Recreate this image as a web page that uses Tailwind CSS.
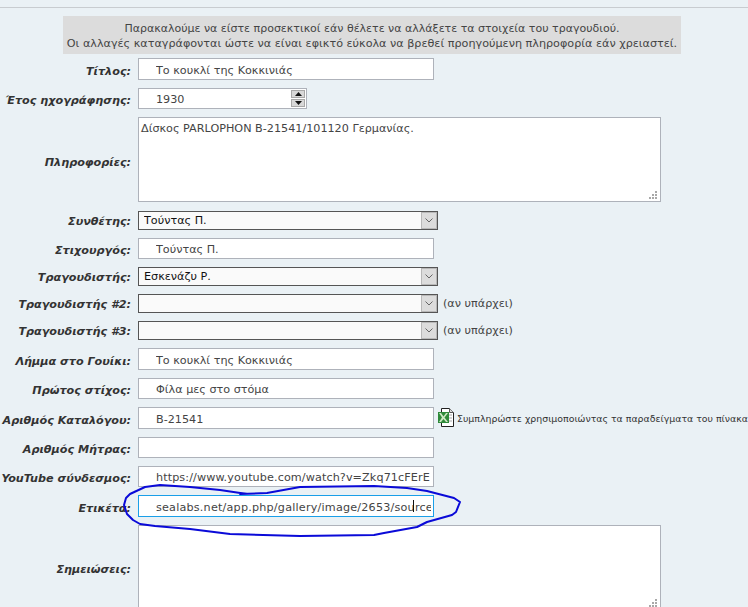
<!DOCTYPE html>
<html lang="en">
  <head>
    <meta charset="UTF-8" />
    <title>Επεξεργασία τραγουδιού</title>
    <script src="https://cdn.jsdelivr.net/npm/@tailwindcss/browser@4"></script>
  </head>
  <body class="bg-[#eaf1f5] h-[607px] overflow-hidden font-['DejaVu_Sans',sans-serif] text-[11.2px] text-[#444]">
    <div class="relative h-[607px] overflow-hidden pt-[7px]">
      <div class="border-t border-[#c8ccd0]"></div>

      <div class="ml-[63px] mt-2 w-[618px] h-[38px] bg-[#dcdcdc] text-center leading-[15px] pt-[5px] whitespace-nowrap">
        <span class="text-[11px]">Παρακαλούμε να είστε προσεκτικοί εάν θέλετε να αλλάξετε τα στοιχεία του τραγουδιού.</span><br />
        Οι αλλαγές καταγράφονται ώστε να είναι εφικτό εύκολα να βρεθεί προηγούμενη πληροφορία εάν χρειαστεί.
      </div>

      <form class="mt-1 grid grid-cols-[131px_1fr] gap-x-[7px] gap-y-2 leading-[13px]">
        <label class="flex items-center justify-end whitespace-nowrap font-bold italic text-[#333] pt-1">Τίτλος:</label>
        <input class="w-[296px] h-[22px] border border-[#aeb2ba] bg-white pl-[17px] pr-0.5 pt-0.5 outline-none text-[#444]" value="Το κουκλί της Κοκκινιάς" />

        <label class="flex items-center justify-end whitespace-nowrap font-bold italic text-[#333] pt-1">Έτος ηχογράφησης:</label>
        <div class="relative w-[169px] h-[21px]">
          <input class="w-full h-full border border-[#aeb2ba] bg-white pl-[17px] pt-0.5 outline-none text-[#444]" value="1930" />
          <div class="absolute right-[2px] top-[2px] w-[14px] h-[17px] flex flex-col gap-px bg-white">
            <span class="flex-1 flex items-center justify-center bg-[#d8d8d8] border border-[#a8a8a8]"><svg width="7" height="4"><path d="M3.5 0 7 4H0z" fill="#111" /></svg></span>
            <span class="flex-1 flex items-center justify-center bg-[#d8d8d8] border border-[#a8a8a8]"><svg width="7" height="4"><path d="M0 0h7L3.5 4z" fill="#111" /></svg></span>
          </div>
        </div>

        <label class="flex items-center justify-end whitespace-nowrap font-bold italic text-[#333] pt-1">Πληροφορίες:</label>
        <div class="relative w-[523px] h-[85px] mb-px">
          <textarea class="block w-full h-full resize-none border border-[#aeb2ba] bg-white px-[2px] pt-[4px] outline-none text-[#444]">Δίσκος PARLOPHON B-21541/101120 Γερμανίας.</textarea>
          <svg class="absolute right-[4px] bottom-[3px]" width="8" height="8" fill="#a8a8a8"><path d="M6 0h2v2H6zM3 3h2v2H3zM6 3h2v2H6zM0 6h2v2H0zM3 6h2v2H3zM6 6h2v2H6z" /></svg>
        </div>

        <label class="flex items-center justify-end whitespace-nowrap font-bold italic text-[#333] pt-0.5">Συνθέτης:</label>
        <div class="relative w-[300px] h-[19px]">
          <select class="appearance-none w-full h-full border border-[#555] bg-[#fafafa] pl-[5px] outline-none text-[#111]"><option>Τούντας Π.</option></select>
          <span class="absolute right-px top-px w-[16px] h-[17px] flex items-center justify-center bg-[#dcdcdc] border border-[#b8b8b8]"><svg width="8" height="5" fill="none" stroke="#666"><path d="m.5.5 3.5 3.5L7.5.5" /></svg></span>
        </div>

        <label class="flex items-center justify-end whitespace-nowrap font-bold italic text-[#333] pt-1">Στιχουργός:</label>
        <input class="w-[296px] h-[21px] border border-[#aeb2ba] bg-white pl-[17px] pr-0.5 pt-0.5 outline-none text-[#444]" value="Τούντας Π." />

        <label class="flex items-center justify-end whitespace-nowrap font-bold italic text-[#333] pt-0.5">Τραγουδιστής:</label>
        <div class="relative w-[300px] h-[19px]">
          <select class="appearance-none w-full h-full border border-[#555] bg-[#fafafa] pl-[5px] outline-none text-[#111]"><option>Εσκενάζυ Ρ.</option></select>
          <span class="absolute right-px top-px w-[16px] h-[17px] flex items-center justify-center bg-[#dcdcdc] border border-[#b8b8b8]"><svg width="8" height="5" fill="none" stroke="#666"><path d="m.5.5 3.5 3.5L7.5.5" /></svg></span>
        </div>

        <label class="flex items-center justify-end whitespace-nowrap font-bold italic text-[#333] pt-0.5">Τραγουδιστής #2:</label>
        <div class="flex items-center gap-[5px]">
          <div class="relative w-[300px] h-[19px]">
            <select class="appearance-none w-full h-full border border-[#555] bg-[#fafafa] pl-[5px] outline-none"><option></option></select>
            <span class="absolute right-px top-px w-[16px] h-[17px] flex items-center justify-center bg-[#dcdcdc] border border-[#b8b8b8]"><svg width="8" height="5" fill="none" stroke="#666"><path d="m.5.5 3.5 3.5L7.5.5" /></svg></span>
          </div>
          <span>(αν υπάρχει)</span>
        </div>

        <label class="flex items-center justify-end whitespace-nowrap font-bold italic text-[#333] pt-0.5">Τραγουδιστής #3:</label>
        <div class="flex items-center gap-[5px]">
          <div class="relative w-[300px] h-[19px]">
            <select class="appearance-none w-full h-full border border-[#555] bg-[#fafafa] pl-[5px] outline-none"><option></option></select>
            <span class="absolute right-px top-px w-[16px] h-[17px] flex items-center justify-center bg-[#dcdcdc] border border-[#b8b8b8]"><svg width="8" height="5" fill="none" stroke="#666"><path d="m.5.5 3.5 3.5L7.5.5" /></svg></span>
          </div>
          <span>(αν υπάρχει)</span>
        </div>

        <label class="flex items-center justify-end whitespace-nowrap font-bold italic text-[#333] pt-1">Λήμμα στο Γουίκι:</label>
        <input class="w-[296px] h-[22px] border border-[#aeb2ba] bg-white pl-[17px] pr-0.5 pt-0.5 outline-none text-[#444]" value="Το κουκλί της Κοκκινιάς" />

        <label class="flex items-center justify-end whitespace-nowrap font-bold italic text-[#333] pt-1">Πρώτος στίχος:</label>
        <input class="w-[296px] h-[21px] border border-[#aeb2ba] bg-white pl-[17px] pr-0.5 pt-0.5 outline-none text-[#444]" value="Φίλα μες στο στόμα" />

        <label class="flex items-center justify-end whitespace-nowrap font-bold italic text-[#333] pt-1">Αριθμός Καταλόγου:</label>
        <div class="flex items-center gap-[3px] whitespace-nowrap">
          <input class="w-[296px] h-[22px] border border-[#aeb2ba] bg-white pl-[17px] pr-0.5 pt-0.5 outline-none text-[#444]" value="B-21541" />
          <svg width="16" height="20" viewBox="0 0 16 20" class="shrink-0 ml-px">
            <path d="M3.500.5h8l4 4v14h-12z" fill="#fff" stroke="#222" />
            <path d="M11.500.5v4h4" fill="#ddd" stroke="#555" />
            <path d="M0 4h11v11H0z" fill="#2f8a3a" />
            <path d="M1 5h2l2.500 3.500L8 5h2L6.500 9.500 10 14H8l-2.500-3L3 14H1l3-4.500z" fill="#cfe8c4" />
            <path d="M11 7h3M11 10h3M11 13h3" stroke="#aaa" />
          </svg>
          <span class="text-[9.4px] text-[#333]">Συμπληρώστε χρησιμοποιώντας τα παραδείγματα του πίνακα</span>
        </div>

        <label class="flex items-center justify-end whitespace-nowrap font-bold italic text-[#333] pt-1">Αριθμός Μήτρας:</label>
        <input class="w-[296px] h-[21px] border border-[#aeb2ba] bg-white pl-[17px] pr-0.5 pt-0.5 outline-none text-[#444]" />

        <label class="flex items-center justify-end whitespace-nowrap font-bold italic text-[#333] pt-1">YouTube σύνδεσμος:</label>
        <input class="w-[296px] h-[21px] border border-[#aeb2ba] bg-white pl-[17px] pr-0.5 pt-0.5 outline-none text-[#444] tracking-[0.1px]" value="https://www.youtube.com/watch?v=Zkq71cFErE" />

        <label class="flex items-center justify-end whitespace-nowrap font-bold italic text-[#333] pt-1">Ετικέτα:</label>
        <input class="w-[296px] h-[22px] border border-[#1a9fe8] bg-white pl-[17px] pr-0.5 pt-0.5 outline-none text-[#444] tracking-[0.2px]" value="sealabs.net/app.php/gallery/image/2653/source" />

        <label class="flex items-center justify-end whitespace-nowrap font-bold italic text-[#333] pt-1">Σημειώσεις:</label>
        <div class="relative w-[523px] h-[85px]">
          <textarea class="block w-full h-full resize-none border border-[#aeb2ba] bg-white px-[2px] pt-[4px] outline-none text-[#444]"></textarea>
          <svg class="absolute right-[4px] bottom-[3px]" width="8" height="8" fill="#a8a8a8"><path d="M6 0h2v2H6zM3 3h2v2H3zM6 3h2v2H6zM0 6h2v2H0zM3 6h2v2H3zM6 6h2v2H6z" /></svg>
        </div>
      </form>

      <!-- text caret in the focused field -->
      <div class="absolute left-[413px] top-[500px] w-px h-3 bg-[#111]"></div>

      <!-- hand drawn annotation on top of the screenshot -->
      <svg class="absolute left-0 top-0 pointer-events-none" width="748" height="607" fill="none" stroke="#0a0ad8" stroke-width="2" stroke-linejoin="round" stroke-linecap="round">
        <path d="M247 494 220 490 190 487 160 485 145 487 130 494 126 498 124 505 127 514 133 520 140 524 155 526 190 529 230 534 300 536 374 535 384 533 417 527 427 522 452 515 456 512 460 502 454 498 427 491 407 488 374 486 300 487 267 493 240 494" />
      </svg>
    </div>
  </body>
</html>
